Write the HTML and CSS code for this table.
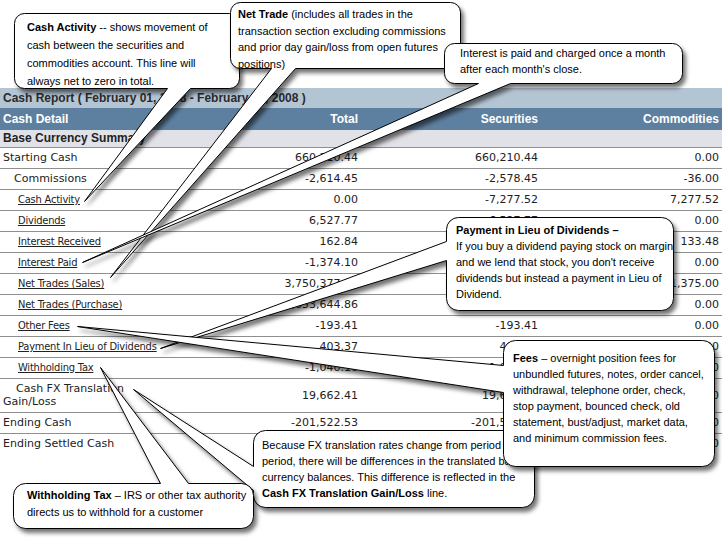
FILE: index.html
```html
<!DOCTYPE html>
<html>
<head>
<meta charset="utf-8">
<title>Cash Report</title>
<link rel="stylesheet" href="styles.css">
</head>
<body>
<div class="page">
  <div class="report">
    <div class="title">Cash Report ( February 01, 2008 - February 29, 2008 )</div>
    <div class="row head"><div>Cash Detail</div><div class="num">Total</div><div class="num">Securities</div><div class="num">Commodities</div></div>
    <div class="row section"><div>Base Currency Summary</div><div></div><div></div><div></div></div>
    <div class="row"><div>Starting Cash</div><div class="num">660,210.44</div><div class="num">660,210.44</div><div class="num">0.00</div></div>
    <div class="row"><div class="ind">Commissions</div><div class="num">-2,614.45</div><div class="num">-2,578.45</div><div class="num">-36.00</div></div>
    <div class="row"><div class="lnk"><a>Cash Activity</a></div><div class="num">0.00</div><div class="num">-7,277.52</div><div class="num">7,277.52</div></div>
    <div class="row"><div class="lnk"><a>Dividends</a></div><div class="num">6,527.77</div><div class="num">6,527.77</div><div class="num">0.00</div></div>
    <div class="row"><div class="lnk"><a>Interest Received</a></div><div class="num">162.84</div><div class="num">29.36</div><div class="num">133.48</div></div>
    <div class="row"><div class="lnk"><a>Interest Paid</a></div><div class="num">-1,374.10</div><div class="num">-1,374.10</div><div class="num">0.00</div></div>
    <div class="row"><div class="lnk"><a>Net Trades (Sales)</a></div><div class="num">3,750,377.56</div><div class="num">3,749,002.56</div><div class="num">1,375.00</div></div>
    <div class="row"><div class="lnk"><a>Net Trades (Purchase)</a></div><div class="num">-4,653,644.86</div><div class="num">-4,653,644.86</div><div class="num">0.00</div></div>
    <div class="row"><div class="lnk"><a>Other Fees</a></div><div class="num">-193.41</div><div class="num">-193.41</div><div class="num">0.00</div></div>
    <div class="row"><div class="lnk"><a>Payment In Lieu of Dividends</a></div><div class="num">403.37</div><div class="num">403.37</div><div class="num">0.00</div></div>
    <div class="row"><div class="lnk"><a>Withholding Tax</a></div><div class="num">-1,040.10</div><div class="num">-1,040.10</div><div class="num">0.00</div></div>
    <div class="row"><div class="wrap">Cash FX Translation Gain/Loss</div><div class="num mid">19,662.41</div><div class="num mid">19,662.41</div><div class="num mid">0.00</div></div>
    <div class="row"><div>Ending Cash</div><div class="num">-201,522.53</div><div class="num">-201,522.53</div><div class="num">0.00</div></div>
    <div class="row last"><div>Ending Settled Cash</div><div class="num">-201,522.53</div><div class="num">-201,522.53</div><div class="num">0.00</div></div>
  </div>

  <svg class="bal" width="722" height="540" viewBox="0 0 722 540">
    <defs>
      <filter id="sh" x="-20%" y="-20%" width="140%" height="140%">
        <feDropShadow dx="3" dy="4" stdDeviation="2.2" flood-color="#000" flood-opacity="0.55"/>
      </filter>
    </defs>
    <path class="shape" d="M24,13 H229 A10,10 0 0 1 239,23 V78 A10,10 0 0 1 229,88 H190 L84,201 L167,88 H24 A10,10 0 0 1 14,78 V23 A10,10 0 0 1 24,13 Z"/>
  </svg>
  <div class="note n-cash"><b>Cash Activity</b> -- shows movement of<br>cash between the securities and<br>commodities account. This line will<br>always net to zero in total.</div>

  <svg class="bal" width="722" height="540" viewBox="0 0 722 540">
    <path class="shape" d="M240,2 H450 A10,10 0 0 1 460,12 V58 A10,10 0 0 1 450,68 H295 L110,277 L271,68 H240 A10,10 0 0 1 230,58 V12 A10,10 0 0 1 240,2 Z"/>
  </svg>
  <div class="note n-net"><b>Net Trade</b> (includes all trades in the<br>transaction section excluding commissions<br>and prior day gain/loss from open futures<br>positions)</div>

  <svg class="bal" width="722" height="540" viewBox="0 0 722 540">
    <path class="shape" d="M454,43 H672 A10,10 0 0 1 682,53 V73 A10,10 0 0 1 672,83 H510 L82,262 L478,83 H454 A10,10 0 0 1 444,73 V53 A10,10 0 0 1 454,43 Z"/>
  </svg>
  <div class="note n-int">Interest is paid and charged once a month<br>after each month's close.</div>

  <svg class="bal" width="722" height="540" viewBox="0 0 722 540">
    <path class="shape" d="M458,217 H661 A12,12 0 0 1 673,229 V298 A12,12 0 0 1 661,310 H458 A12,12 0 0 1 446,298 V260 L160,348 L446,241 V229 A12,12 0 0 1 458,217 Z"/>
  </svg>
  <div class="note n-pay"><b>Payment in Lieu of Dividends –</b><br>If you buy a dividend paying stock on margin<br>and we lend that stock, you don't receive<br>dividends but instead a payment in Lieu of<br>Dividend.</div>

  <svg class="bal" width="722" height="540" viewBox="0 0 722 540">
    <path class="shape" d="M265,430 H522 A12,12 0 0 1 534,442 V495 A12,12 0 0 1 522,507 H265 A12,12 0 0 1 253,495 V490 L133,389 L253,466 V442 A12,12 0 0 1 265,430 Z"/>
  </svg>
  <div class="note n-fx">Because FX translation rates change from period to<br>period, there will be differences in the translated base<br>currency balances. This difference is reflected in the<br><b>Cash FX Translation Gain/Loss</b> line.</div>

  <svg class="bal" width="722" height="540" viewBox="0 0 722 540">
    <path class="shape" d="M25,483 H160 L100,367 L188,483 H241 A12,12 0 0 1 253,495 V516 A12,12 0 0 1 241,528 H25 A12,12 0 0 1 13,516 V495 A12,12 0 0 1 25,483 Z"/>
  </svg>
  <div class="note n-wh"><b>Withholding Tax</b> – IRS or other tax authority<br>directs us to withhold for a customer</div>

  <svg class="bal" width="722" height="540" viewBox="0 0 722 540">
    <path class="shape" d="M515,340 H702 A12,12 0 0 1 714,352 V454 A12,12 0 0 1 702,466 H515 A12,12 0 0 1 503,454 V392 L77,326 L503,365 V352 A12,12 0 0 1 515,340 Z"/>
  </svg>
  <div class="note n-fees"><b>Fees</b> – overnight position fees for<br>unbundled futures, notes, order cancel,<br>withdrawal, telephone order, check,<br>stop payment, bounced check, old<br>statement, bust/adjust, market data,<br>and minimum commission fees.</div>
</div>
</body>
</html>
```

FILE: styles.css
```css
* { box-sizing: border-box; }
html, body { margin: 0; padding: 0; background: #fff; }
body {
  font-family: "DejaVu Sans", Verdana, sans-serif;
  font-size: 11px;
  color: #222;
}
.page {
  position: relative;
  width: 722px;
  height: 540px;
  overflow: hidden;
  padding-top: 88px;
}
.report { width: 722px; }
.title {
  height: 20px;
  background: #b3c4d3;
  font: bold 12px/20px "Liberation Sans", Arial, sans-serif;
  color: #2a2a2a;
  padding-left: 3px;
  white-space: nowrap;
}
.row {
  display: grid;
  grid-template-columns: 181px 180px 180px 181px;
  border-bottom: 1px solid #8f8f8f;
}
.row > div {
  padding: 3px 3px 4px;
  line-height: 13px;
}
.num { text-align: right; }
.mid { align-self: center; }
.head {
  background: #5e80a0;
  color: #fff;
  font: bold 12px "Liberation Sans", Arial, sans-serif;
  border-bottom: 0;
}
.head > div { padding: 4px 3px; line-height: 14px; }
.section {
  background: #e1e1e8;
  font: bold 12px "Liberation Sans", Arial, sans-serif;
  color: #222;
}
.section > div { padding: 2px 3px; line-height: 13px; }
.ind { padding-left: 14px !important; }
.lnk { padding-left: 18px !important; white-space: nowrap; }
.lnk a {
  color: #222;
  text-decoration: underline;
  font-family: "DejaVu Sans Condensed", "DejaVu Sans", sans-serif;
  font-stretch: condensed;
  letter-spacing: -0.2px;
}
.wrap { text-indent: 13px; }
.last { border-bottom: 0; }

.bal {
  position: absolute;
  left: 0;
  top: 0;
  overflow: visible;
}
.shape {
  fill: #fff;
  stroke: #000;
  stroke-width: 1;
  filter: url(#sh);
  transform: translate(0.5px, 0.5px);
}
.note {
  position: absolute;
  font: 11px/16px "Liberation Sans", Arial, sans-serif;
  color: #000;
  white-space: nowrap;
}
.n-cash { left: 27px; top: 18px; line-height: 18px; }
.n-net { left: 238px; top: 6px; line-height: 16.5px; }
.n-int { left: 460px; top: 45px; line-height: 16px; }
.n-pay { left: 456px; top: 222px; line-height: 16px; }
.n-fx { left: 262px; top: 437px; line-height: 16px; }
.n-wh { left: 27px; top: 487px; line-height: 17px; }
.n-fees { left: 513px; top: 350px; line-height: 16px; }
```
